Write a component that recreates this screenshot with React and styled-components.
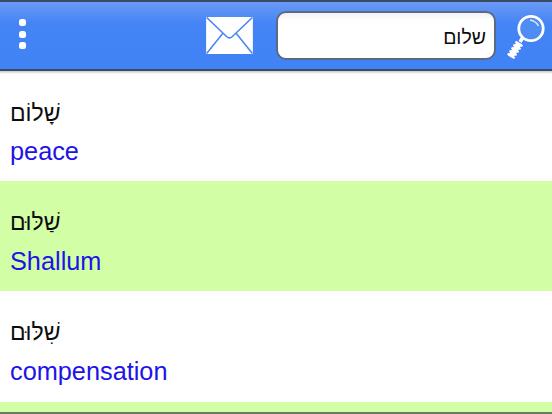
import React from "react";
import styled, { createGlobalStyle } from "styled-components";

const Global = createGlobalStyle`
  html, body { margin: 0; padding: 0; background: #fff; }
  #root { width: 552px; height: 414px; overflow: hidden; }
`;

const Page = styled.div`
  width: 552px;
  height: 414px;
  display: flex;
  flex-direction: column;
  overflow: hidden;
  position: relative;
  font-family: "Liberation Sans", Arial, sans-serif;
`;

const Toolbar = styled.header`
  flex: none;
  height: 71px;
  box-sizing: border-box;
  border-top: 2px solid #3d4a66;
  border-bottom: 2px solid #3c4a68;
  background: linear-gradient(#6a9af5 0, #4484f5 22px, #4083f5 100%);
  display: flex;
  align-items: center;
  padding: 0 7px 0 19px;
`;

const MenuButton = styled.div`
  display: flex;
  flex-direction: column;
  gap: 4.5px;
  width: 7px;
  margin-right: 180px;
  margin-bottom: 3px;
`;

const Dot = styled.span`
  width: 7px;
  height: 7px;
  border-radius: 2.5px;
  background: #fff;
`;

const Mail = styled.svg`
  display: block;
  width: 47px;
  height: 37px;
  margin-right: 23px;
  flex: none;
`;

const SearchBox = styled.div`
  width: 220px;
  height: 49px;
  box-sizing: border-box;
  border: 2px solid #5a6a85;
  border-radius: 10px;
  background: linear-gradient(#f2f2f2 0, #fff 8px);
  display: flex;
  align-items: center;
  justify-content: flex-start;
  padding: 3px 8px 0;
  font-family: "Liberation Sans", "Noto Sans", sans-serif;
  font-size: 19.5px;
  color: #0c0c0c;
  direction: rtl;
  margin-right: 9px;
  flex: none;
`;

const Magnifier = styled.svg`
  display: block;
  width: 40px;
  height: 50px;
  flex: none;
`;

const Shadow = styled.div`
  flex: none;
  height: 3px;
  background: linear-gradient(#c8c8c8, #fff);
`;

const Row = styled.div`
  flex: none;
  height: ${(p) => p.$h}px;
  box-sizing: border-box;
  background: ${(p) => (p.$alt ? "#d2ffa6" : "#fff")};
  padding: ${(p) => p.$top}px 10px 0;
`;

const Hebrew = styled.div`
  font-family: "Liberation Sans", "DejaVu Sans", sans-serif;
  font-size: 23px;
  line-height: 30px;
  color: #0c0c0c;
  direction: rtl;
  width: max-content;
`;

const English = styled.div`
  font-size: 25.3px;
  line-height: 30px;
  margin-top: ${(p) => p.$gap}px;
  color: #2013e8;
`;

const Footer = styled.div`
  position: absolute;
  left: 0;
  right: 0;
  bottom: 0;
  height: 2px;
  background: #6a7a60;
`;

const rows = [
  { he: "שָׁלוֹם", en: "peace", h: 107, top: 24, gap: 8 },
  { he: "שַׁלּוּם", en: "Shallum", h: 110, top: 26, gap: 9, alt: true },
  { he: "שִׁלּוּם", en: "compensation", h: 111, top: 26, gap: 9 },
  { he: "", en: "", h: 12, top: 0, alt: true },
];

export default function App() {
  return (
    <Page>
      <Global />
      <Toolbar>
        <MenuButton>
          <Dot />
          <Dot />
          <Dot />
        </MenuButton>
        <Mail viewBox="0 0 48 38">
          <rect x="0" y="0" width="48" height="38" fill="#fff" />
          <path d="M0.5 0.5 L21 20 Q24 23 27 20 L47.5 0.5 M0.5 37.5 L17 17 M47.5 37.5 L31 17" fill="none" stroke="#4a88ef" strokeWidth="1.6" />
        </Mail>
        <SearchBox>שלום</SearchBox>
        <Magnifier viewBox="0 0 40 50">
          <circle cx="26" cy="17.5" r="12.2" fill="#4f8cf3" stroke="#fff" strokeWidth="2.8" />
          <path d="M25 9 Q31 10 33.5 15" fill="none" stroke="#d8e6ff" strokeWidth="1.6" />
          <path d="M17.5 27 L15 31" stroke="#fff" strokeWidth="3.5" />
          <path d="M14.5 32 L5.5 46" stroke="#fff" strokeWidth="6" />
          <path d="M14.5 32 L5.5 46" stroke="#fff" strokeWidth="8.5" strokeDasharray="2 1.6" />
        </Magnifier>
      </Toolbar>
      <Shadow />
      {rows.map((r, i) => (
        <Row key={i} $alt={r.alt} $h={r.h} $top={r.top}>
          {r.he && <Hebrew>{r.he}</Hebrew>}
          {r.en && <English $gap={r.gap}>{r.en}</English>}
        </Row>
      ))}
      <Footer />
    </Page>
  );
}
